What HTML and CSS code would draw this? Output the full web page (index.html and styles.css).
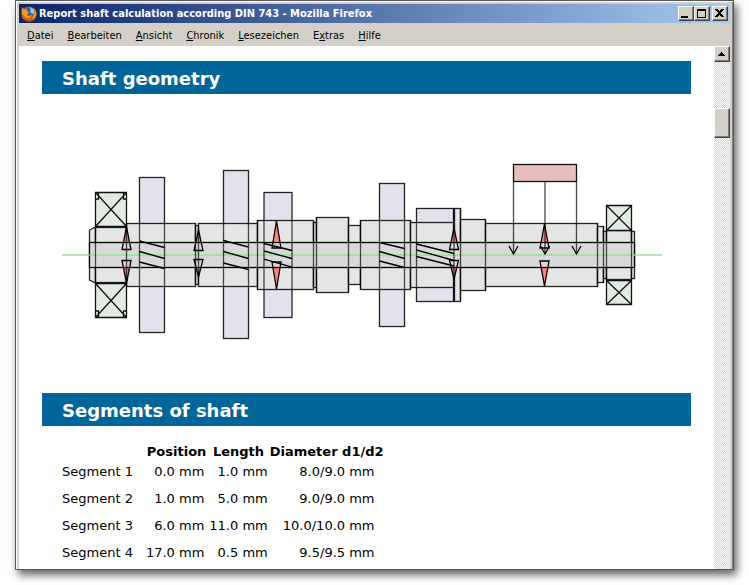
FILE: index.html
```html
<!DOCTYPE html>
<html lang="en">

<head>
  <meta charset="utf-8">
  <title>Report shaft calculation according DIN 743</title>
  <link rel="stylesheet" href="styles.css">
</head>

<body>
  <div class="window">
    <header class="title-bar">
      <svg class="logo" viewBox="0 0 16 16" aria-hidden="true">
        <circle cx="8" cy="8" r="7.5" fill="#d9560f"/>
        <circle cx="8.5" cy="6.5" r="5.5" fill="#2763b5"/>
        <path d="M8 1.5C11 1 14 3.5 13.5 7L11 8L9 5L10 3Z" fill="#8fd0f3"/>
        <path d="M1 1L3 3.5L6 3L5.500 5L9 6.5L6 8L7 10L11 9C10 13 5 13 3 10L.5 7Z" fill="#f79b21"/>
        <path d="M13 2C17 6 16 13 11 15C6 17 1 13 .5 8C3 14 10 14 12.5 9C13.5 7 13.5 4 13 2Z" fill="#e8650e"/>
        <path d="M14 4C15.5 8 14 12 11 13.5C13 11 14 8 14 4Z" fill="#fcc436"/>
        <path d="M3 12C6 15 10 15 12 13C10 16 5 16 3 12Z" fill="#a8300a"/>
      </svg>
      <h1>Report shaft calculation according DIN 743 - Mozilla Firefox</h1>
      <div class="window-buttons">
        <button type="button" aria-label="Minimize"><svg viewBox="0 0 12 11"><path d="M1 8h7v2h-7z"/></svg></button>
        <button type="button" aria-label="Maximize"><svg viewBox="0 0 12 11"><path fill-rule="evenodd" d="M1 1h9v9h-9zM2 3v6h7v-6z"/></svg></button>
        <button type="button" class="close" aria-label="Close"><svg viewBox="0 0 12 11"><path d="M1 1h3v1h1v1h1v-1h1v-1h3v1h-1v1h-1v1h-1v2h1v1h1v1h1v1h-3v-1h-1v-1h-1v1h-1v1h-3v-1h1v-1h1v-1h1v-2h-1v-1h-1v-1h-1z"/></svg></button>
      </div>
    </header>

    <nav class="menu-bar">
      <button type="button"><u>D</u>atei</button>
      <button type="button"><u>B</u>earbeiten</button>
      <button type="button"><u>A</u>nsicht</button>
      <button type="button"><u>C</u>hronik</button>
      <button type="button"><u>L</u>esezeichen</button>
      <button type="button">E<u>x</u>tras</button>
      <button type="button"><u>H</u>ilfe</button>
    </nav>

    <div class="view">
      <main class="report">
        <h2>Shaft geometry</h2>

        <svg class="shaft" viewBox="62 160 600 184" role="img" aria-label="Shaft with gears, bearings and loads">
          <!-- gears -->
          <g class="gear">
            <rect x="139.5" y="177.5" width="25" height="155"/>
            <rect x="223.5" y="170.5" width="25" height="168"/>
            <rect x="264" y="192.5" width="28" height="125"/>
            <rect x="379.5" y="183.5" width="25" height="143"/>
            <rect x="416.5" y="208.5" width="37" height="93"/>
          </g>

          <!-- shaft segments -->
          <g class="segment">
            <path d="M89.5 230L95.5 227V283L89.5 280Z"/>
            <rect x="95.5" y="227.5" width="31" height="55"/>
            <rect x="126.5" y="223.5" width="69" height="63"/>
            <rect x="195.5" y="225.5" width="3" height="59"/>
            <rect x="198.5" y="223.5" width="59" height="63"/>
            <rect x="257.5" y="220.5" width="56" height="69"/>
            <rect x="313.5" y="222.5" width="3" height="65"/>
            <rect x="316.5" y="217.5" width="32" height="75"/>
            <rect x="348.5" y="225.5" width="12" height="59"/>
            <rect x="360.5" y="220.5" width="50" height="69"/>
            <rect x="410.5" y="222.5" width="43" height="65"/>
            <rect x="454.5" y="208.5" width="6" height="93"/>
            <rect x="460.5" y="219.5" width="25" height="71"/>
            <rect x="485.5" y="223.5" width="112" height="63"/>
            <rect x="597.5" y="226.5" width="6" height="56"/>
            <rect x="603.5" y="231.5" width="3" height="47"/>
            <rect x="606.5" y="230.5" width="25" height="49"/>
            <rect x="631.5" y="231.5" width="3" height="47"/>
          </g>

          <!-- bearings -->
          <g class="bearing">
            <path d="M95.5 192.5H126.5V226.5H95.5ZL126.5 226.5M126.5 192.5L95.5 226.5M95.5 199H98.5V192.5M126.5 199H123.5V192.5"/>
            <path d="M95.5 283.5H126.5V317.5H95.5ZL126.5 317.5M126.5 283.5L95.5 317.5M95.5 311H98.5V317.5M126.5 311H123.5V317.5"/>
            <path d="M606.5 205.5H631.5V230.5H606.5ZL631.5 230.5M631.5 205.5L606.5 230.5"/>
            <path d="M606.5 280.5H631.5V304.5H606.5ZL631.5 304.5M631.5 280.5L606.5 304.5"/>
          </g>

          <path class="force" d="M126.5 227L131 249.5H122ZM126.5 283L131 260.5H122ZM198.5 230L203 250.5H194ZM198.5 277L203 259.5H194ZM276.5 221L281 248H272ZM276.5 289L281 262H272ZM454 228L458.5 249.5H449.5ZM454 279L458.5 260.5H449.5ZM544.5 224L549 248H540ZM544.5 286L549 261H540Z"/>

          <!-- bore -->
          <rect class="bore" x="89.5" y="242.5" width="545" height="25"/>
          <path class="axis" d="M62 255H662"/>

          <path class="line soft" d="M95.5 227V283M126.5 223V286M139.5 223V287M164.5 223V287M195.5 225V284M198.5 225V284M223.5 223V287M248.5 223V287M257.5 220V289M264 220V289M292 220V289M313.5 222V287M316.5 217V292M348.5 217V292M360.5 220V289M379.5 220V289M404.5 220V289M410.5 220V289M416.5 222V287M454 208V301M460.5 208V301M485.5 220V291M597.5 223V286M603.5 226V283M606.5 230V280M631.5 230V280"/>
          <path class="line" d="M139.5 241L164.5 247.5M139.5 251.5L164.5 258.5M139.5 262L164.5 268.5M223.5 240.5L248.5 247M223.5 251.5L248.5 258.5M223.5 263L248.5 269.5M264 243.5L292 250.5M264 251L292 258.5M264 259L292 267M379.5 242.5L404.5 248.5M379.5 251.5L404.5 258.5M379.5 261L404.5 267.5M416.5 244L454 253.5M416.5 250L454 260.5M416.5 256.5L454 266"/>
          <path class="line" d="M126.5 227L131 249.5H122ZM126.5 283L131 260.5H122ZM198.5 230L203 250.5H194ZM198.5 277L203 259.5H194ZM276.5 221L281 248H272ZM276.5 289L281 262H272ZM454 228L458.5 249.5H449.5ZM454 279L458.5 260.5H449.5ZM544.5 224L549 248H540ZM544.5 286L549 261H540Z"/>

          <!-- distributed load -->
          <rect class="load" x="513.5" y="164.5" width="63" height="17"/>
          <path class="line soft" d="M513.5 182V254M545 182V254M576.5 182V254"/>
          <path class="line" d="M509 246L513.5 254L518 246M540.5 246L545 254L549.5 246M572 246L576.5 254L581 246"/>
        </svg>

        <h2>Segments of shaft</h2>

        <table class="segments">
          <thead>
            <tr>
              <td></td>
              <th scope="col">Position</th>
              <th scope="col">Length</th>
              <th scope="col">Diameter d1/d2</th>
            </tr>
          </thead>
          <tbody>
            <tr>
              <td>Segment 1</td>
              <td>0.0 mm</td>
              <td>1.0 mm</td>
              <td>8.0/9.0 mm</td>
            </tr>
            <tr>
              <td>Segment 2</td>
              <td>1.0 mm</td>
              <td>5.0 mm</td>
              <td>9.0/9.0 mm</td>
            </tr>
            <tr>
              <td>Segment 3</td>
              <td>6.0 mm</td>
              <td>11.0 mm</td>
              <td>10.0/10.0 mm</td>
            </tr>
            <tr>
              <td>Segment 4</td>
              <td>17.0 mm</td>
              <td>0.5 mm</td>
              <td>9.5/9.5 mm</td>
            </tr>
          </tbody>
        </table>
      </main>

      <div class="scrollbar">
        <button type="button" class="scroll-up" aria-label="Scroll up"><svg viewBox="0 0 12 12"><path d="M5 4h1v1h1v1h1v1h1v1h-7v-1h1v-1h1v-1h1z"/></svg></button>
        <div class="thumb"></div>
      </div>
    </div>
  </div>
</body>

</html>
```

FILE: styles.css
```css
* {
  box-sizing: border-box;
}

body {
  margin: 0;
  padding: 0 15px 15px;
  height: 100vh;
  background-color: #fff;
  color: #000;
  font-family: "DejaVu Sans", Verdana, sans-serif;
  font-size: 13px;
}

.window {
  display: flex;
  flex-direction: column;
  height: 100%;
  padding: 3px 3px 0;
  background-color: #d4d0c8;
  border: 1px solid #57565a;
  box-shadow: inset 1px 1px 0 #fff, inset -1px 0 0 #808080, 3px 5px 8px rgba(0, 0, 0, 0.6);
}

.title-bar {
  display: flex;
  align-items: center;
  height: 19px;
  padding: 0 2px;
  background: linear-gradient(to right, #0a246a, #a6caf0);
  color: #fff;
}

.logo {
  width: 16px;
  height: 16px;
  margin-right: 2px;
}

.title-bar h1 {
  flex: 1;
  margin: 0;
  font-family: "DejaVu Sans Condensed", "DejaVu Sans", Tahoma, sans-serif;
  font-stretch: condensed;
  font-size: 11px;
  line-height: 19px;
  white-space: nowrap;
}

.window-buttons {
  display: flex;
}

.window-buttons button,
.scroll-up,
.thumb {
  padding: 0;
  background-color: #d4d0c8;
  border: 1px solid;
  border-color: #fff #404040 #404040 #fff;
  border-radius: 0;
  box-shadow: inset -1px -1px 0 #808080;
}

.window-buttons button {
  width: 16px;
  height: 15px;
}

.window-buttons .close {
  margin-left: 2px;
}

.window-buttons svg,
.scroll-up svg {
  display: block;
  width: 12px;
  margin: 0 auto;
  shape-rendering: crispEdges;
}

.menu-bar {
  display: flex;
  gap: 14px;
  height: 23px;
  padding: 1px 8px 0;
}

.menu-bar button {
  padding: 0;
  background: none;
  border: 0;
  font-family: "DejaVu Sans Condensed", "DejaVu Sans", Tahoma, sans-serif;
  font-stretch: condensed;
  font-size: 11px;
}

.view {
  display: flex;
  flex: 1;
  min-height: 0;
  background-color: #fff;
}

.report {
  flex: 1;
  min-width: 0;
  padding: 15px 23px 0;
  overflow: hidden;
}

.report h2 {
  margin: 0;
  padding: 2px 20px 0;
  background-color: #069;
  color: #fff;
  font-size: 18px;
  line-height: 31px;
}

.shaft {
  display: block;
  width: calc(100% - 49px);
  margin: 66px 29px 49px 20px;
  stroke-width: 1.3;
}

.gear rect {
  fill: #e2e2ec;
  stroke: #222;
}

.segment > * {
  fill: #e5e5e5;
  stroke: #222;
}

.bearing path {
  fill: #e2ebe2;
  stroke: #111;
}

.force {
  fill: #ff8080;
}

.bore {
  fill: #d9d9d9;
  stroke: #000;
}

.axis {
  stroke: #8fe08f;
  stroke-opacity: 0.65;
  stroke-width: 2;
}

.line {
  fill: none;
  stroke: #000;
}

.soft {
  stroke-opacity: 0.7;
}

.load {
  fill: #e6bebe;
  stroke: #111;
}

.segments {
  margin: 18px 0 0 20px;
  border-collapse: collapse;
  line-height: 16px;
  white-space: nowrap;
}

.segments th {
  padding: 0 1px 4px;
}

.segments td {
  padding: 0 1px 11px;
  text-align: right;
}

.segments thead td {
  padding: 0;
}

.segments td:first-child {
  padding-left: 0;
  padding-right: 12px;
  text-align: left;
}

.segments td:nth-child(2) {
  padding-right: 4px;
}

.segments td:last-child {
  padding-right: 10px;
}

.scrollbar {
  width: 16px;
  background: repeating-conic-gradient(#d4d0c8 0 25%, #fff 0 50%) 0 0 / 2px 2px;
}

.scroll-up {
  display: block;
  width: 100%;
  height: 16px;
}

.thumb {
  height: 30px;
  margin-top: 46px;
}
```
